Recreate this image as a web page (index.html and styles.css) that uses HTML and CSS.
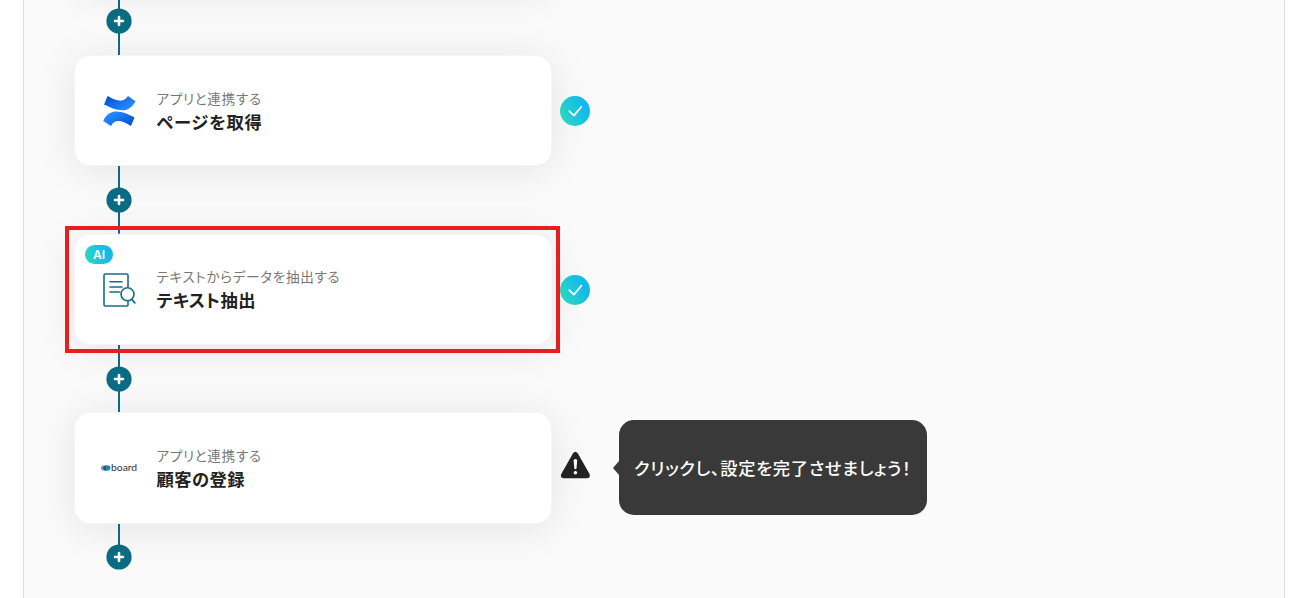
FILE: index.html
```html
<!DOCTYPE html>
<html lang="ja">
<head>
<meta charset="utf-8">
<title>フロー</title>
<link rel="stylesheet" href="styles.css">
</head>
<body>
<svg class="defs" width="0" height="0">
  <defs>
    <linearGradient id="teal" x1="0" y1="0.75" x2="1" y2="0.25"><stop offset="0" stop-color="#2dd9bd"/><stop offset="0.8" stop-color="#12b9ec"/></linearGradient>
    <linearGradient id="upper" x1="0" y1="0.2" x2="0.75" y2="0.7"><stop offset="0" stop-color="#0052cc"/><stop offset="1" stop-color="#2684ff"/></linearGradient>
    <linearGradient id="lower" x1="1" y1="0.8" x2="0.25" y2="0.3"><stop offset="0" stop-color="#0052cc"/><stop offset="1" stop-color="#2684ff"/></linearGradient>
    <symbol id="plus" viewBox="0 0 26 26"><circle cx="13" cy="13" r="12.6" fill="#0b6b83"/><path d="M13 9v8M9 13h8" stroke="#fff" stroke-width="2.6" stroke-linecap="round"/></symbol>
    <symbol id="check" viewBox="0 0 30 30"><circle cx="15" cy="15" r="15" fill="url(#teal)"/><path d="M9.3 15.2l4.6 4.4 7.5-9" fill="none" stroke="#fff" stroke-width="1.7" stroke-linecap="round" stroke-linejoin="round"/></symbol>
  </defs>
</svg>
<main class="canvas">
  <div class="flow">
    <div class="row"><section class="card"></section></div>
    <div class="connector"><svg class="plus"><use href="#plus"/></svg></div>

    <div class="row">
      <section class="card">
        <svg class="icon" viewBox="0 0 36 36">
          <path d="M6.6 3L3 11.6C14 17 27 22.5 34.500 8.2L27 3C23 9.6 16.6 8.8 6.6 3Z" fill="url(#upper)"/>
          <path d="M30 33L33.500 24.4C22.5 18.8 9 13.3 2.200 28L10 33C13.5 26 20 27 30 33Z" fill="url(#lower)"/>
        </svg>
        <div class="text"><p class="kind">アプリと連携する</p><h2 class="title title-page">ページを取得</h2></div>
      </section>
      <svg class="status"><use href="#check"/></svg>
    </div>
    <div class="connector"><svg class="plus"><use href="#plus"/></svg></div>

    <div class="row">
      <section class="card">
        <span class="ai">AI</span>
        <svg class="icon" viewBox="0 0 36 36" fill="none" stroke="#176f85" stroke-width="1.6" stroke-linecap="round" stroke-linejoin="round">
          <path d="M27 15V3.2Q27 2 25.8 2H4.2Q3 2 3 3.2V32.8Q3 34 4.2 34H25.8Q27 34 27 32.8V29"/>
          <path d="M9 9.8H21M9 15H21M9 20H18.5"/>
          <circle cx="26.5" cy="22.3" r="6.5"/>
          <path d="M31 27.5L33.8 30.8" stroke-width="1.8"/>
        </svg>
        <div class="text"><p class="kind">テキストからデータを抽出する</p><h2 class="title">テキスト抽出</h2></div>
      </section>
      <svg class="status"><use href="#check"/></svg>
      <div class="highlight"></div>
    </div>
    <div class="connector"><svg class="plus"><use href="#plus"/></svg></div>

    <div class="row">
      <section class="card">
        <div class="icon board">
          <svg class="board-mark" viewBox="0 0 10 6"><rect x="0" y=".5" width="9" height="5" rx="2.5" fill="#719da9"/><circle cx="4.8" cy="3" r="2.6" fill="#176080"/><circle cx="7.2" cy="3" r="2.4" fill="#2389b8"/></svg><span class="board-name">board</span>
        </div>
        <div class="text"><p class="kind">アプリと連携する</p><h2 class="title">顧客の登録</h2></div>
      </section>
      <svg class="status warning" viewBox="0 0 30 30"><path d="M12.9 2.6Q15.4 -1 17.9 2.6L29.4 22.8Q31 27 27.4 27.2H3.4Q-.4 27 1.4 22.8Z" fill="#222"/><path d="M13.6 9.5Q13.7 8 15.4 8T17.2 9.5L16.5 17.3Q16.4 18.3 15.4 18.3T14.3 17.3Z" fill="#fff"/><circle cx="15.4" cy="21.8" r="1.8" fill="#fff"/></svg>
      <div class="bubble">クリックし、設定を完了させましょう！</div>
    </div>
    <div class="connector end"><svg class="plus"><use href="#plus"/></svg></div>
  </div>
</main>
</body>
</html>
```
FILE: styles.css
```css
* { box-sizing: border-box; }
body {
  margin: 0;
  height: 598px;
  overflow: hidden;
  background: #fff;
  font-family: "Noto Sans CJK JP", sans-serif;
  font-feature-settings: "palt";
}
.defs { display: block; }
.canvas {
  height: 598px;
  margin: 0 21px 0 23px;
  padding-left: 50px;
  overflow: hidden;
  background: #fafafa;
  border: solid #dfdfdf;
  border-width: 0 1px;
}
.flow { margin-top: -123.8px; }
.row {
  position: relative;
  display: flex;
  align-items: center;
  height: 111.3px;
}
.card {
  position: relative;
  display: flex;
  align-items: center;
  gap: 19px;
  width: 478px;
  height: 100%;
  padding-left: 26px;
  background: #fff;
  border: 1px solid #f5f5f5;
  border-radius: 16px;
  box-shadow: 0 4px 40px rgba(0, 0, 0, .09);
}
.icon { width: 36px; height: 36px; margin-top: 1px; flex: none; }
.text { padding: 0 0 1px .4px; white-space: nowrap; }
.kind {
  margin: 0;
  color: #777;
  font-size: 13.6px;
  font-weight: 400;
  line-height: 22px;
  letter-spacing: .67px;
}
.title {
  margin: 0;
  color: #222;
  font-size: 17.3px;
  font-weight: 700;
  line-height: 25px;
  letter-spacing: .5px;
}
.title-page { letter-spacing: .8px; }
.status { width: 30px; height: 30px; margin: 1px 0 0 8px; flex: none; z-index: 1; }
.warning { margin: 0 0 3px 8px; }
.connector {
  position: relative;
  z-index: 1;
  display: flex;
  align-items: center;
  justify-content: center;
  width: 90px;
  height: 67.4px;
  background: linear-gradient(#0b6b83, #0b6b83) center / 2px 100% no-repeat;
}
.end { height: 33.4px; align-items: flex-end; }
.plus { width: 26px; height: 26px; flex: none; }
.end .plus { margin-bottom: -13px; }
.ai {
  position: absolute;
  left: 10px;
  top: 10px;
  width: 28px;
  height: 19px;
  border-radius: 10px;
  background: linear-gradient(75deg, #2dd9bd, #12b9ec 80%);
  color: #fff;
  font: 600 12px/19px Inter, sans-serif;
  text-align: center;
}
.highlight {
  position: absolute;
  left: -9px;
  top: -8px;
  width: 495px;
  height: 127px;
  border: 4px solid #e81e1e;
  z-index: 2;
}
.board { display: flex; align-items: center; }
.board-mark { width: 10px; height: 6px; flex: none; }
.board-name {
  font: 9px/12px Lato, sans-serif;
  color: #333;
  transform: scaleX(1.15);
  transform-origin: left;
}
.bubble {
  position: relative;
  display: flex;
  align-items: center;
  width: 308px;
  height: 95px;
  margin-left: 29px;
  padding-left: 15px;
  border-radius: 15px;
  background: #393939;
  color: #fff;
  font-size: 17.3px;
  font-weight: 500;
  white-space: nowrap;
  letter-spacing: .7px;
}
.bubble::before {
  content: "";
  position: absolute;
  left: -6px;
  top: 41px;
  border: solid transparent;
  border-width: 7px 6px 7px 0;
  border-right-color: #393939;
}
```
